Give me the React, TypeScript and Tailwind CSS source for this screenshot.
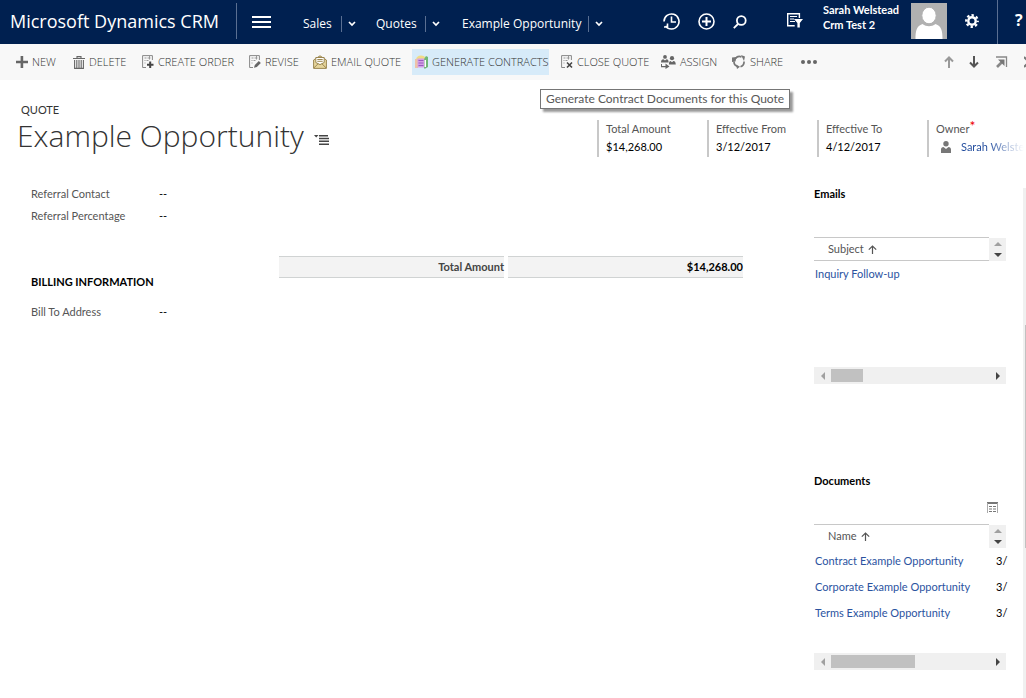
import type { ReactNode } from 'react'

function Chevron() {
  return (
    <svg width="8" height="6" viewBox="0 0 8 6" fill="none" stroke="currentColor" strokeWidth="1.7">
      <path d="M1 1l3 3 3-3" />
    </svg>
  )
}

function NewIcon() {
  return (
    <svg width="12" height="12" viewBox="0 0 12 12" fill="#666">
      <path d="M4.6 0h2.6v4.7H12v2.5H7.2V12H4.6V7.2H0V4.7h4.6z" />
    </svg>
  )
}

function TrashIcon() {
  return (
    <svg width="12" height="13" viewBox="0 0 12 13" fill="none" stroke="#666">
      <path d="M0 2.5h12M4 2V.6h4V2M1.6 4v8.4h8.8V4M3.8 4v8M6 4v8M8.2 4v8" strokeWidth="1.1" />
    </svg>
  )
}

function PageLines() {
  return (
    <>
      <path d="M4 12.5H.6V.6h9.8V5" stroke="#888" strokeWidth="1" fill="none" />
      <path d="M2.5 3h2M5.5 3h3M2.5 5.5h1M4.5 5.5h2M2.5 8h1M7.5 1v3.5" stroke="#999" fill="none" />
    </>
  )
}

function OrderIcon() {
  return (
    <svg width="12" height="14" viewBox="0 0 12 14">
      <PageLines />
      <path d="M7.2 6.5h2v2.3h2.3v2H9.2v2.3h-2v-2.3H5v-2h2.2z" fill="#444" />
    </svg>
  )
}

function ReviseIcon() {
  return (
    <svg width="12" height="14" viewBox="0 0 12 14">
      <PageLines />
      <path d="M5 12.8l.8-2.8 4-4 2 2-4 4z" fill="#666" />
    </svg>
  )
}

function CloseQuoteIcon() {
  return (
    <svg width="12" height="14" viewBox="0 0 12 14">
      <PageLines />
      <path d="M6 7.5l5 5M11 7.5l-5 5" stroke="#444" strokeWidth="1.6" />
    </svg>
  )
}

function EmailIcon() {
  return (
    <svg width="14" height="14" viewBox="0 0 14 14" fill="none" stroke="#9b8752">
      <path d="M.6 5L7 .8 13.4 5v8.4H.6z" fill="#e6d59c" />
      <path d="M2.8 2.5h8.4v5L7 9.6 2.8 7.5z" fill="#fff" />
      <path d="M4.3 4.5h5.4M4.3 6.3h5.4M.8 13L5 8.8M13.2 13L9 8.8" />
    </svg>
  )
}

function ContractsIcon() {
  return (
    <svg width="13" height="14" viewBox="0 0 13 14">
      <path d="M1 5c0-3 2-4.500 5-4.500 2 0 3.500.8 4.500 2l-1 3H1z" fill="#f0dc86" />
      <path d="M9 4l2-3 2 1v10l-2.500 1.500H9z" fill="#72b877" />
      <path d="M9.500 5h1.500v7H9.500z" fill="#fff" />
      <path d="M0 4h3v9H0z" fill="#edc3a8" />
      <path d="M2.500 3.500h6.700v9H2.500z" fill="#d3a0e6" />
      <path d="M3.500 5.500h5M3.500 8h5M3.500 10.500h5" stroke="#9a5cc0" />
    </svg>
  )
}

function AssignIcon() {
  return (
    <svg width="15" height="14" viewBox="0 0 15 14" fill="#666">
      <circle cx="4" cy="1.900" r="1.9" />
      <path d="M0 7.500c0-2.400 1-3.200 2.400-3.200L4 5.500l1.600-1.200C7 4.300 7.600 5 7.600 7.500z" />
      <circle cx="11" cy="3.200" r="2.100" />
      <path d="M7.900 9.500c0-3 .8-3.600 1.700-3.600L11 7.300l1.400-1.400c1.400 0 2.200.6 2.400 3.600z" />
      <path d="M1 9v2h3.500V8.500l4 3-4 2.500v-1.700H0V9z" />
    </svg>
  )
}

function ShareIcon() {
  return (
    <svg width="14" height="14" viewBox="0 0 14 14" fill="none" stroke="#777" strokeWidth="1.7">
      <path d="M2 6.500a5 5 0 0 0 3.500 5M8.500 11.700a5 5 0 0 0 3.500-5.200M3.500 3.500a5 5 0 0 1 6-1.500" />
      <path d="M0 2.500l4.500-.500-1 4.500L0 7zM4 9.500l4 2.200L5 14zM9 0l4 1.500-1 4.500z" fill="#777" stroke="none" />
    </svg>
  )
}

const NAV = [
  { label: 'Sales', text: 'w-[38px]', step: 'w-[35px]' },
  { label: 'Quotes', text: 'w-[49px]', step: 'w-[37px]' },
  { label: 'Example Opportunity', text: 'w-[126px]', step: 'w-[17px]' },
]

const COMMANDS = [
  { label: 'NEW', width: 'w-[57px]', icon: <NewIcon /> },
  { label: 'DELETE', width: 'w-[69px]', icon: <TrashIcon /> },
  { label: 'CREATE ORDER', width: 'w-[107px]', icon: <OrderIcon /> },
  { label: 'REVISE', width: 'w-[64px]', icon: <ReviseIcon /> },
  { label: 'EMAIL QUOTE', width: 'w-[102px]', icon: <EmailIcon /> },
  {
    label: 'GENERATE CONTRACTS',
    width: 'w-[146px]',
    icon: <ContractsIcon />,
    tip: 'Generate Contract Documents for this Quote',
  },
  { label: 'CLOSE QUOTE', width: 'w-[100px]', icon: <CloseQuoteIcon /> },
  { label: 'ASSIGN', width: 'w-[71px]', icon: <AssignIcon /> },
  { label: 'SHARE', width: 'w-[68px]', icon: <ShareIcon /> },
]

const DOCUMENTS = ['Contract Example Opportunity', 'Corporate Example Opportunity', 'Terms Example Opportunity']

function TopBar() {
  return (
    <header className="flex h-11 items-start overflow-hidden bg-[#002050] font-['Open_Sans',sans-serif] text-white">
      <div className="mt-[3px] flex h-9 w-[237px] shrink-0 items-center border-r border-[#5a6f92] pl-[10px] text-[18px] whitespace-nowrap">
        Microsoft Dynamics CRM
      </div>
      <button type="button" aria-label="Menu" className="ml-[15px] flex h-11 w-5 shrink-0 items-center">
        <svg width="20" height="12" viewBox="0 0 20 12" stroke="currentColor" strokeWidth="2">
          <path d="M0 1h19M0 6h19M0 11h19" />
        </svg>
      </button>
      <nav className="ml-[31px] flex h-12 shrink-0 items-center">
        {NAV.map((item) => (
          <div key={item.label} className="flex items-center text-[12px] whitespace-nowrap">
            <a href="#" className={`${item.text} font-medium`}>{item.label}</a>
            <button type="button" aria-label={`${item.label} menu`} className={`${item.step} flex h-4 items-center border-l border-[#5a6f92] pl-[6px]`}>
              <Chevron />
            </button>
          </div>
        ))}
      </nav>
      <div className="ml-auto flex h-11 shrink-0 items-center">
        <button type="button" aria-label="Recent" className="mr-[18px] mb-[2px]">
          <svg width="17" height="17" viewBox="0 0 17 17" fill="none" stroke="currentColor" strokeWidth="1.600">
            <path d="M2.500 13A7.500 7.500 0 1 0 1 8.500M1 14h3.500v-3.500" />
            <path d="M8.500 3.500v5.500h4.500" />
          </svg>
        </button>
        <button type="button" aria-label="Create" className="mr-[18px] mb-[2px]">
          <svg width="17" height="17" viewBox="0 0 17 17" fill="none" stroke="currentColor" strokeWidth="1.600">
            <circle cx="8.500" cy="8.500" r="7.500" />
            <path d="M8.500 4v9M4 8.500h9" strokeWidth="2" />
          </svg>
        </button>
        <button type="button" aria-label="Search" className="mr-10">
          <svg width="14" height="14" viewBox="0 0 14 14" fill="none" stroke="currentColor" strokeWidth="1.800">
            <circle cx="8.300" cy="5.500" r="4.400" />
            <path d="M5 9L.8 13.200" />
          </svg>
        </button>
        <button type="button" aria-label="Advanced find" className="mr-5 mb-1">
          <svg width="16" height="15" viewBox="0 0 16 15" fill="none" stroke="currentColor">
            <path d="M12.400 5V.700H.700v12h7" strokeWidth="1.400" />
            <path d="M3 3.500h7M3 6h4M3 8.500h5" strokeWidth="1.100" />
            <path d="M7 6h9l-3.200 4v4.500h-2.400V10z" fill="currentColor" stroke="none" />
          </svg>
        </button>
        <div className="mb-[10px] w-[88px] font-['Lato',sans-serif] text-[11px] leading-[15px] font-bold whitespace-nowrap">
          <div>Sarah Welstead</div>
          <div>Crm Test 2</div>
        </div>
        <svg width="36" height="36" viewBox="0 0 36 36" className="mb-[2px]" role="img" aria-label="Profile">
          <path d="M0 0h36v36H0z" fill="#b1b1b1" />
          <path d="M4.500 36c0-8 1-13 7-15 4 3 9 3 13 0 6 2 7 7 7 15z" fill="#fff" />
          <ellipse cx="18" cy="12.500" rx="7.200" ry="8.300" fill="#fff" stroke="#b1b1b1" />
        </svg>
        <button type="button" aria-label="Settings" className="mr-[18px] mb-[2px] ml-[18px]">
          <svg width="14" height="14" viewBox="0 0 14 14" fill="none" stroke="currentColor">
            <circle cx="7" cy="7" r="3.700" strokeWidth="2.400" />
            <circle cx="7" cy="7" r="5.800" strokeWidth="2.200" strokeDasharray="2.400 2.155" strokeDashoffset="1.200" />
          </svg>
        </button>
        <button type="button" aria-label="Help" className="flex h-11 w-[29px] items-center border-l border-[#5a6f92] pb-1 pl-[17px] text-[16px] font-bold">
          ?
        </button>
      </div>
    </header>
  )
}

function CommandBar() {
  return (
    <div className="flex h-9 items-center bg-[#f8f8f8] pl-[13px] text-[#333]">
      <ul className="flex shrink-0">
        {COMMANDS.map((cmd) => (
          <li key={cmd.label} className={`${cmd.width} relative`}>
            <button
              type="button"
              className={`flex h-[26px] items-center gap-1 px-[3px] font-['Open_Sans',sans-serif] text-[11px] font-light whitespace-nowrap ${cmd.tip ? 'w-[137px] bg-[#d7ebf9]' : ''}`}
            >
              <span className="shrink-0">{cmd.icon}</span>
              {cmd.label}
            </button>
            {cmd.tip && (
              <div role="tooltip" className="absolute top-10 left-32 z-10 flex h-5 items-center border border-[#767676] bg-white px-[5px] text-[12px] whitespace-nowrap text-[#575757] shadow-[3px_3px_2px_rgba(0,0,0,0.4)]">
                {cmd.tip}
              </div>
            )}
          </li>
        ))}
      </ul>
      <button type="button" aria-label="More commands" className="ml-1 flex shrink-0 gap-[2px]">
        <i className="size-1 rounded-full bg-[#666]" />
        <i className="size-1 rounded-full bg-[#666]" />
        <i className="size-1 rounded-full bg-[#666]" />
      </button>
      <div className="ml-auto flex shrink-0 items-center">
        <button type="button" aria-label="Previous record" className="mr-[15px] text-[#999]">
          <svg width="10" height="12" viewBox="0 0 10 12" fill="none" stroke="currentColor" strokeWidth="2">
            <path d="M5 12V1.500M1 5.500l4-4 4 4" />
          </svg>
        </button>
        <button type="button" aria-label="Next record" className="mr-[17px] text-[#555]">
          <svg width="10" height="12" viewBox="0 0 10 12" fill="none" stroke="currentColor" strokeWidth="2">
            <path d="M5 0v10.500M1 6.500l4 4 4-4" />
          </svg>
        </button>
        <button type="button" aria-label="Pop out" className="mr-4">
          <svg width="12" height="12" viewBox="0 0 12 12" fill="none" stroke="#888">
            <path d="M0 1h10.500v10" strokeWidth="1.300" />
            <path d="M1 11l5-5" strokeWidth="2.600" />
            <path d="M2 3.500h6.500V10z" fill="#777" stroke="none" />
          </svg>
        </button>
        <button type="button" aria-label="Close" className="w-[2px] overflow-hidden">
          <svg width="12" height="12" viewBox="0 0 12 12" stroke="#777" strokeWidth="2">
            <path d="M0 1l10 10M0 11L10 1" />
          </svg>
        </button>
      </div>
    </div>
  )
}

function HeaderField({ label, required, children }: { label: string; required?: boolean; children: ReactNode }) {
  return (
    <div className="w-[110px] shrink-0 border-l-2 border-[#c8c8c8] pl-[7px] text-[11px] leading-[18px] whitespace-nowrap">
      <dt className="flex h-[18px] text-[#555]">
        {label}
        {required && <span className="text-[14px] leading-3 text-[#e00]">*</span>}
      </dt>
      <dd className="text-black">{children}</dd>
    </div>
  )
}

function RecordHeader() {
  return (
    <div className="flex h-[97px] justify-between overflow-hidden">
      <div className="shrink-0 pt-[22px] pl-[17px]">
        <div className="pl-1 text-[11px] leading-4 text-[#333]">QUOTE</div>
        <div className="flex items-center gap-[10px]">
          <h1 className="font-['Open_Sans',sans-serif] text-[30px] leading-9 font-light whitespace-nowrap text-[#333]">Example Opportunity</h1>
          <button type="button" aria-label="Form selector" className="mt-2">
            <svg width="15" height="10" viewBox="0 0 15 10" fill="#444">
              <path d="M0 0h4.500L2.200 2.500zM5 0h9v1.500H5zM5 2.800h10v1.500H5zM5 5.600h10v1.500H5zM5 8.400h10v1.500H5z" />
            </svg>
          </button>
        </div>
      </div>
      <dl className="mt-10 flex h-[37px] w-[429px] shrink-0">
        <HeaderField label="Total Amount">$14,268.00</HeaderField>
        <HeaderField label="Effective From">3/12/2017</HeaderField>
        <HeaderField label="Effective To">4/12/2017</HeaderField>
        <HeaderField label="Owner" required>
          <span className="flex w-[88px] items-center gap-[10px] pl-[5px]">
            <svg width="10" height="12" viewBox="0 0 10 12" fill="#777" className="shrink-0">
              <circle cx="5" cy="2.700" r="2.700" />
              <path d="M0 12V8.500C0 7 1 6 2.500 6L5 8l2.500-2C9 6 10 7 10 8.500V12z" />
            </svg>
            <a href="#" className="overflow-hidden bg-linear-to-r from-[#1f4a9c] from-40% to-transparent bg-clip-text text-transparent">
              Sarah Welstead
            </a>
          </span>
        </HeaderField>
      </dl>
    </div>
  )
}

function Field({ label }: { label: string }) {
  return (
    <div className="flex h-[22px] items-center">
      <dt className="w-32 text-[#555]">{label}</dt>
      <dd className="text-black">--</dd>
    </div>
  )
}

function RowScroller() {
  return (
    <div className="flex h-[23px] flex-col items-center justify-center gap-[7px] bg-[#f0f0f0]">
      <button type="button" aria-label="Scroll up">
        <svg width="8" height="4" viewBox="0 0 8 4" fill="#a0a0a0" className="block"><path d="M0 4h8L4 0z" /></svg>
      </button>
      <button type="button" aria-label="Scroll down">
        <svg width="8" height="4" viewBox="0 0 8 4" fill="#444" className="block"><path d="M0 0h8L4 4z" /></svg>
      </button>
    </div>
  )
}

function SubGrid({ column, underline, children }: { column: string; underline?: boolean; children: ReactNode }) {
  return (
    <table className="w-full table-fixed text-left">
      <thead>
        <tr>
          <th className={`${underline ? 'border-y' : 'border-t'} border-[#c8c8c8] p-0 pl-[14px] font-normal text-[#555]`}>
            <span className="flex items-center gap-1">
              {column}
              <svg width="9" height="9" viewBox="0 0 9 9" fill="none" stroke="#555" strokeWidth="1.200">
                <path d="M4.500 9V1M.800 4.700L4.500 1l3.700 3.700" />
              </svg>
            </span>
          </th>
          <th className="w-[17px] p-0"><RowScroller /></th>
        </tr>
      </thead>
      <tbody className="text-[#2b539f]">{children}</tbody>
    </table>
  )
}

function HorizontalScroll({ thumb }: { thumb: string }) {
  return (
    <div className="flex h-[17px] items-center justify-between bg-[#f0f0f0]">
      <button type="button" aria-label="Scroll left" className="flex w-[17px] justify-center">
        <svg width="4" height="8" viewBox="0 0 4 8" fill="#a0a0a0"><path d="M4 0v8L0 4z" /></svg>
      </button>
      <div className="flex-1"><div className={`${thumb} h-[13px] bg-[#c1c1c1]`} /></div>
      <button type="button" aria-label="Scroll right" className="flex w-[17px] justify-center">
        <svg width="4" height="8" viewBox="0 0 4 8" fill="#444"><path d="M0 0v8l4-4z" /></svg>
      </button>
    </div>
  )
}

export default function App() {
  return (
    <div className="flex min-h-screen flex-col overflow-hidden bg-white font-['Lato','Open_Sans',sans-serif]">
      <TopBar />
      <CommandBar />
      <RecordHeader />
      <div className="flex grow text-[11px] leading-4">
        <main className="grid grow grid-cols-[248px_1fr_192px] pr-[17px] pl-[31px]">
          <section className="pt-[6px]">
            <dl>
              <Field label="Referral Contact" />
              <Field label="Referral Percentage" />
            </dl>
            <h2 className="mt-[47px] font-bold text-black">BILLING INFORMATION</h2>
            <dl className="mt-[11px]">
              <Field label="Bill To Address" />
            </dl>
          </section>
          <section className="pt-[79px] pr-[71px]">
            <dl className="grid grid-cols-[225fr_235fr] gap-1 text-right leading-5 font-bold">
              <dt className="border-y border-[#d0d3d3] bg-[#f3f3f3] text-[#444]">Total Amount</dt>
              <dd className="border-y border-[#d0d3d3] bg-[#f3f3f3] text-black">$14,268.00</dd>
            </dl>
          </section>
          <aside className="pt-[9px]">
            <section className="h-[287px]">
              <h2 className="mb-[35px] font-bold text-black">Emails</h2>
              <div className="h-[130px]">
                <SubGrid column="Subject" underline>
                  <tr className="h-[26px]">
                    <td className="p-0 pl-[1px]"><a href="#">Inquiry Follow-up</a></td>
                  </tr>
                </SubGrid>
              </div>
              <HorizontalScroll thumb="w-8" />
            </section>
            <section>
              <h2 className="font-bold text-black">Documents</h2>
              <div className="flex h-[35px] items-center justify-end pt-[2px] pr-2">
                <button type="button" aria-label="Open associated grid">
                  <svg width="11" height="11" viewBox="0 0 11 11" fill="none" stroke="#777">
                    <path d="M0 1h11" strokeWidth="2" />
                    <path d="M.500 1v10M10.500 1v10" stroke="#aaa" />
                    <path d="M2 4.500h3M6 4.500h3M2 7h3M6 7h3M2 9.500h3M6 9.500h3" />
                  </svg>
                </button>
              </div>
              <div className="h-[129px]">
                <SubGrid column="Name">
                  {DOCUMENTS.map((doc) => (
                    <tr key={doc} className="h-[26px]">
                      <td className="p-0 pl-[1px] whitespace-nowrap"><a href="#">{doc}</a></td>
                      <td className="p-0 pl-[7px] text-black">3/</td>
                    </tr>
                  ))}
                </SubGrid>
              </div>
              <HorizontalScroll thumb="w-[84px]" />
            </section>
          </aside>
        </main>
        <div className="mt-[11px] w-[3px] shrink-0 bg-[#f0f0f0] pt-[137px] pl-[2px]">
          <div className="h-[223px] bg-[#c1c1c1]" />
        </div>
      </div>
    </div>
  )
}
